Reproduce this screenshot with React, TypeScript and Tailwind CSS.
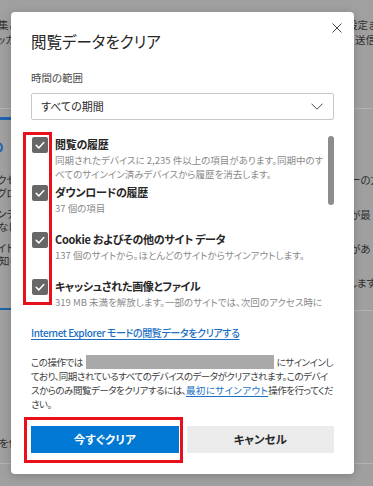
import { ReactNode } from 'react'

const items = [
  {
    title: '閲覧の履歴',
    desc: '同期されたデバイスに 2,235 件以上の項目があります。同期中のすべてのサインイン済みデバイスから履歴を消去します。',
  },
  { title: 'ダウンロードの履歴', desc: '37 個の項目' },
  { title: 'Cookie およびその他のサイト データ', desc: '137 個のサイトから。ほとんどのサイトからサインアウトします。' },
  { title: 'キャッシュされた画像とファイル', desc: '319 MB 未満を解放します。一部のサイトでは、次回のアクセス時に読み込みが遅くなる可能性があります。' },
]

function BgLine({ children, className = '' }: { children: ReactNode; className?: string }) {
  return <p className={`h-[13px] whitespace-nowrap ${className}`}>{children}</p>
}

function BackgroundPage() {
  return (
    <div className="flex h-full text-[10.5px] leading-[13px] text-[#2e2e2e]">
      <div className="w-[11px] shrink-0 overflow-hidden">
        <BgLine className="mt-[18px] -ml-[2px]">集と設</BgLine>
        <BgLine className="mt-[2px] -ml-[3px]">ッカ</BgLine>
        <div className="mt-[62px] h-px bg-[#b3b3b3]" />
        <div className="mt-[8px] h-[3px] bg-[#1f63ad]" />
        <div className="mt-[22px] h-[11px] w-[11px] -ml-[8px] rounded-full border-2 border-[#1f63ad]" />
        <BgLine className="mt-[20px] -ml-[3px]">クセス</BgLine>
        <BgLine className="-ml-[3px]">グロー</BgLine>
        <BgLine className="mt-[8px] -ml-[3px]">ンテン</BgLine>
        <BgLine className="-ml-[2px]">なしで</BgLine>
        <BgLine className="mt-[8px] -ml-[3px]">イトの</BgLine>
        <BgLine className="-ml-[1px]">知らせ</BgLine>
        <div className="mt-[41px] h-[2px] bg-[#1f63ad]" />
        <BgLine className="mt-[126px] -ml-[1px]">を使用</BgLine>
        <div className="mt-[14px] h-px bg-[#b3b3b3]" />
      </div>
      <div className="flex-1" />
      <div className="w-[19px] shrink-0 overflow-hidden">
        <BgLine className="mt-[18px] -ml-[7px]">設定ます</BgLine>
        <BgLine className="mt-[2px] ml-[1px]">送信</BgLine>
        <div className="mt-[62px] h-px bg-[#b3b3b3]" />
        <BgLine className="mt-[64px] -ml-[4px]">ーの方</BgLine>
        <BgLine className="mt-[22px] -ml-[4px]">が最</BgLine>
        <BgLine className="mt-[21px] -ml-[4px]">があ</BgLine>
        <BgLine className="mt-[21px] -ml-[6px]">します</BgLine>
        <div className="mt-[21px] h-px bg-[#b3b3b3]" />
        <div className="mt-[152px] h-px bg-[#b3b3b3]" />
      </div>
    </div>
  )
}

function Checkbox() {
  return (
    <span className="mt-[1px] ml-[1px] flex h-[16px] w-[16px] shrink-0 items-center justify-center rounded-[2px] bg-[#676767]">
      <svg width="12" height="12" viewBox="0 0 12 12" fill="none">
        <path d="M2.2 6.3l2.6 2.6 5-5.4" stroke="white" strokeWidth="1.5" strokeLinecap="round" strokeLinejoin="round" />
      </svg>
    </span>
  )
}

function ClearDialog() {
  return (
    <div className="absolute left-[11px] top-[12px] w-[343px] rounded-[4px] bg-white px-[20px] pt-[18px] pb-[21px] shadow-[0_2px_10px_rgba(0,0,0,0.2)]">
      <button className="absolute right-[12px] top-[11px]">
        <svg width="10" height="10" viewBox="0 0 10 10">
          <path d="M0.5 0.5l9 9M9.5 0.5l-9 9" stroke="#4a4a4a" strokeWidth="1" />
        </svg>
      </button>

      <h2 className="text-[15.5px] leading-[22px] text-[#262626]">閲覧データをクリア</h2>

      <p className="mt-[18px] text-[10.5px] leading-[16px] text-[#4a4a4a]">時間の範囲</p>
      <div className="mt-[7px] flex h-[27px] items-center justify-between rounded-[2px] border border-[#c8c8c8] pl-[9px] pr-[10px] text-[11px] text-[#2a2a2a]">
        <span>すべての期間</span>
        <svg width="12" height="7" viewBox="0 0 12 7" fill="none">
          <path d="M0.5 0.7l5.5 5.5 5.5-5.5" stroke="#4a4a4a" strokeWidth="1" />
        </svg>
      </div>

      <div className="flex h-[188px] overflow-hidden">
        <div className="flex-1 pt-[16px]">
          {items.map((item) => (
            <div key={item.title} className="flex min-h-[47px] gap-[7px] first:min-h-[48px]">
              <Checkbox />
              <div>
                <p className="text-[11px] font-bold leading-[17px] tracking-[-0.3px] text-[#262626]">{item.title}</p>
                <p className="text-[9.5px] leading-[14px] text-[#8a8a8a]">{item.desc}</p>
              </div>
            </div>
          ))}
        </div>
        <div className="w-[6px] shrink-0">
          <div className="mt-[16px] h-[69px] rounded-full bg-[#8c8c8c]" />
        </div>
      </div>

      <a className="mt-[17px] block text-[10px] font-medium leading-[16px] tracking-[-0.4px] text-[#1a6fc4] underline underline-offset-2">
        Internet Explorer モードの閲覧データをクリアする
      </a>

      <p className="mt-[14px] text-[9.5px] leading-[14px] tracking-[-0.5px] text-[#3d3d3d]">
        この操作では
        <span className="mx-[3px] inline-block h-[14px] w-[188px] bg-[#a9a9a9] align-top" />
        にサインインしており、同期されているすべてのデバイスのデータがクリアされます。このデバイスからのみ閲覧データをクリアするには、
        <a className="text-[#1a6fc4] underline underline-offset-2 tracking-[0.4px]">最初にサインアウト</a>
        操作を行ってください。
      </p>

      <div className="mt-[15px] grid h-[27px] grid-cols-2 gap-[8px] text-[11.5px] font-semibold">
        <button className="bg-[#0078d4] text-white">今すぐクリア</button>
        <button className="bg-[#ebebeb] text-[#262626]">キャンセル</button>
      </div>

      <div className="pointer-events-none absolute left-[12px] top-[120px] h-[173px] w-[29px] border-[3px] border-[#e8111b]" />
      <div className="pointer-events-none absolute left-[13px] top-[405px] h-[46px] w-[159px] border-[3px] border-[#e8111b]" />
    </div>
  )
}

export default function App() {
  return (
    <div className="relative h-[486px] w-[373px] overflow-hidden bg-[#a0a0a0] font-['Noto_Sans_CJK_JP',sans-serif] [font-feature-settings:'palt']">
      <BackgroundPage />
      <ClearDialog />
    </div>
  )
}
